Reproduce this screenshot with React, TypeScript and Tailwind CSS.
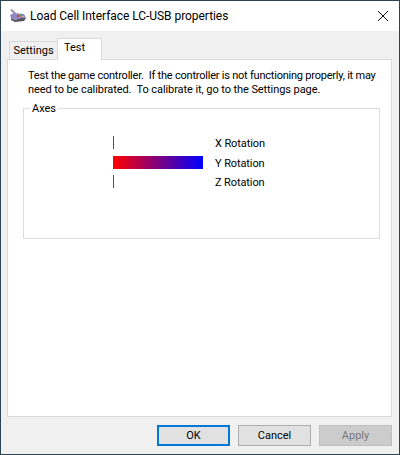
import React from "react";

function GameIcon() {
  return (
    <svg width="18" height="14" viewBox="0 0 18 14" className="block">
      <path d="M1 1 L3 0 L7 4 L5 5 Z" fill="#9a9aa6" />
      <path d="M1 6 L5 4 L15 5 L17 9 L12 9 L6 11 L2 9 Z" fill="#9287c4" />
      <path d="M2 9 L6 11 L12 9 L17 9 L15 12 L6 13 L2 11 Z" fill="#55555f" />
      <rect x="8" y="6" width="2" height="2" fill="#d33a3a" />
      <rect x="11" y="5" width="2" height="2" fill="#3fae4a" />
      <rect x="13" y="7" width="2" height="1" fill="#e0c040" />
    </svg>
  );
}

function AxisRow({ label, full, className }: { label: string; full?: boolean; className?: string }) {
  return (
    <div className={"flex items-center h-[13px] " + (className ?? "")}>
      <div className="w-[90px] h-[13px]">
        {full ? (
          <div className="w-[90px] h-[13px] bg-linear-to-r/srgb from-[#ff0000] to-[#0000ff]" />
        ) : (
          <div className="w-px h-[13px] bg-[#e01020]" />
        )}
      </div>
      <span className="ml-3 mt-[2px] text-[11px] leading-[13px] text-black tracking-[-0.1px]">{label}</span>
    </div>
  );
}

function DlgButton({ children, className }: { children: React.ReactNode; className: string }) {
  return (
    <button className={"w-[73px] h-[21px] flex items-center justify-center text-[11px] leading-none " + className}>
      {children}
    </button>
  );
}

export default function App() {
  return (
    <div className="w-[400px] h-[455px] border border-[#2b4553] bg-[#f0f0f0] flex flex-col overflow-hidden font-['Roboto','Noto_Sans',sans-serif]">
      <div className="h-[30px] bg-white flex items-center shrink-0">
        <div className="ml-[8px] w-[18px]">
          <GameIcon />
        </div>
        <span className="ml-[3px] text-[12px] text-black tracking-[-0.05px]">Load Cell Interface LC-USB properties</span>
        <svg width="12" height="12" viewBox="0 0 12 12" className="ml-auto mr-[10px]">
          <path d="M1 1 L11 11 M11 1 L1 11" stroke="#111" strokeWidth="1" fill="none" />
        </svg>
      </div>

      <div className="flex-1 flex flex-col pl-[6px] pr-[7px] pt-[7px] pb-[6px] min-h-0">
        <div className="flex items-end h-[22px] pl-[2px] relative z-10 -mb-px shrink-0">
          <div className="w-[49px] h-[18px] mb-px pt-px bg-[#f0f0f0] border border-b-0 border-[#d9d9d9] flex items-center justify-center text-[11px] text-black">
            Settings
          </div>
          <div className="w-[45px] h-[22px] -ml-px bg-white border border-b-0 border-[#d9d9d9] flex items-start pt-[1px] pl-[6px] text-[11px] leading-[16px] text-black">
            Test
          </div>
        </div>
        <div className="h-[358px] bg-white border border-[#d9d9d9] px-[15px] pt-[9px] shrink-0">
          <div className="pl-[5px] text-[11px] leading-[14px] text-black whitespace-pre">
            <p className="tracking-[-0.22px]">Test the game controller.  If the controller is not functioning properly, it may</p>
            <p className="tracking-[-0.08px]">need to be calibrated.  To calibrate it, go to the Settings page.</p>
          </div>
          <div className="relative mt-[11px] h-[131px] border border-[#dcdcdc] w-[357px] pl-[89px] pt-[27px] flex flex-col gap-[6px]">
            <span className="absolute -top-[7px] left-[6px] bg-white px-[2px] text-[11px] leading-[13px] text-black">Axes</span>
            <AxisRow label="X Rotation" />
            <AxisRow label="Y Rotation" full className="mt-px" />
            <AxisRow label="Z Rotation" />
          </div>
        </div>
        <div className="flex justify-end gap-[8px] mt-[8px] shrink-0">
          <DlgButton className="border-2 border-[#0078d7] bg-[#e1e1e1] text-black">OK</DlgButton>
          <DlgButton className="border border-[#adadad] bg-[#e1e1e1] text-black">Cancel</DlgButton>
          <DlgButton className="border border-[#bfbfbf] bg-[#cccccc] text-[#787878]">Apply</DlgButton>
        </div>
      </div>
    </div>
  );
}
